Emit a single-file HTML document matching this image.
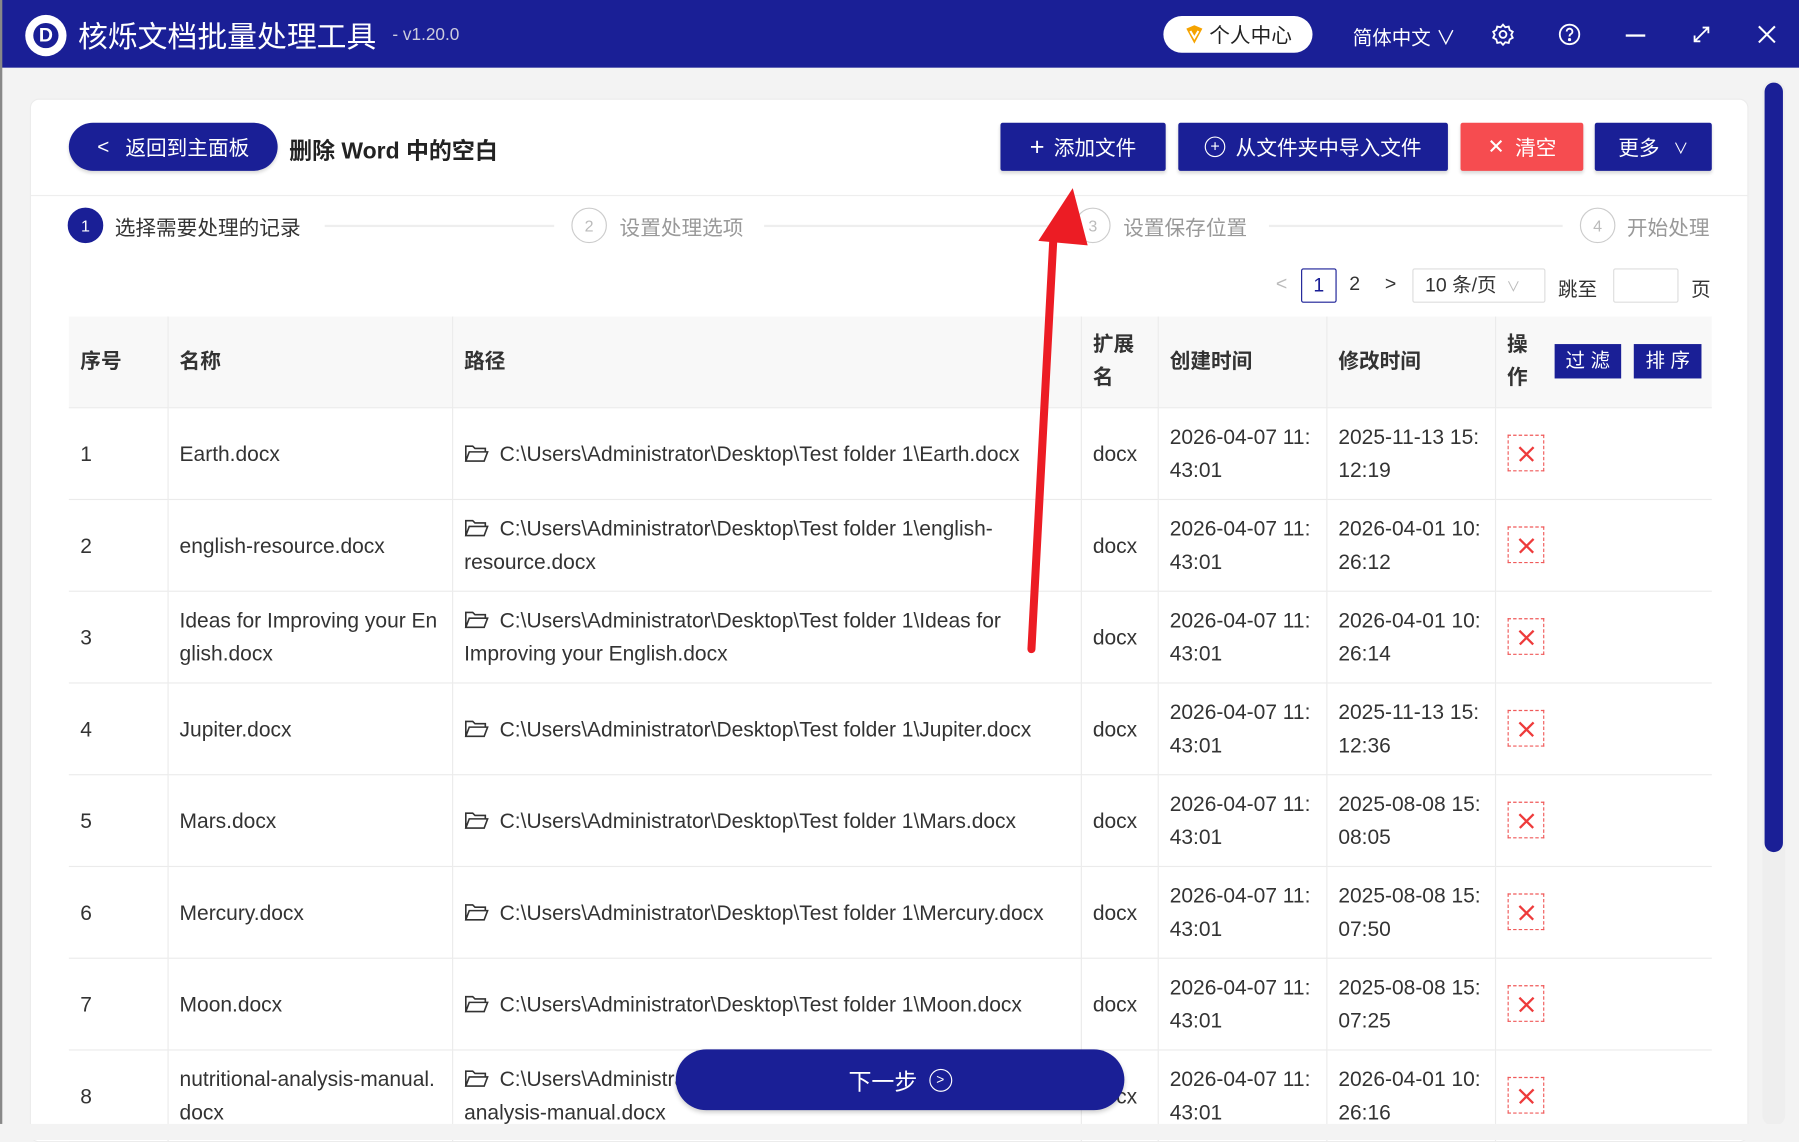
<!DOCTYPE html>
<html><head><meta charset="utf-8">
<style>
*{margin:0;padding:0;box-sizing:border-box}
html,body{width:1799px;height:1140px;overflow:hidden;background:#f3f3f3}
#w{position:absolute;left:0;top:0;width:1568px;height:994px;transform:scale(1.14732,1.14688);transform-origin:0 0;font-family:"Liberation Sans","Noto Sans CJK SC",sans-serif;color:#333;background:#f3f3f3}
.a{position:absolute}
.top{left:0;top:0;width:1568px;height:59px;background:#1a1f96}
.btn{position:absolute;background:#1a1f96;color:#fff;font-size:18px;display:flex;align-items:center;justify-content:center;border-radius:2px;box-shadow:0 2px 3px rgba(0,0,0,.15)}
.circ{position:absolute;width:31px;height:31px;border-radius:50%;border:1.5px solid #ccc;color:#bbb;font-size:14px;display:flex;align-items:center;justify-content:center}
.stx{position:absolute;font-size:18px;color:#999;top:185px}
.ln{position:absolute;height:2px;background:#eee;top:196px}
table{position:absolute;left:60px;top:276px;width:1432px;border-collapse:collapse;table-layout:fixed;font-size:18.3px}
td,th{border-bottom:1px solid #ebebeb;border-right:1px solid #ebebeb;padding:0 10px;text-align:left;vertical-align:middle;line-height:29px}
th{background:#f8f8f8;height:79px;font-weight:bold;font-size:18px;color:#333}
td{height:80px;color:#333;white-space:nowrap;overflow:hidden}
td:last-child,th:last-child{border-right:none}
.x{display:inline-block;width:32px;height:32px;border:1px dashed #f05a5a;position:relative;vertical-align:middle}
.x:before,.x:after{content:"";position:absolute;left:7px;top:15px;width:17px;height:1.5px;background:#ee3b3b;transform:rotate(45deg)}
.x:after{transform:rotate(-45deg)}
.fd{display:inline-block;width:21px;height:15px;vertical-align:-1px;margin-right:10px}
.fb{background:#1a1f96;color:#fff;font-weight:normal;font-size:17px;padding:0 10px;line-height:30px;white-space:nowrap}
</style></head><body><div id="w">
<div class="a top"></div>
<div class="a" style="left:0;top:0;width:2px;height:994px;background:#888"></div>
<div class="a" style="left:22px;top:13px;width:36px;height:36px;border-radius:50%;background:#fff;display:flex;align-items:center;justify-content:center"><div style="width:22px;height:22px;border-radius:50%;background:#1a1f96;color:#fff;font-weight:bold;font-size:17px;display:flex;align-items:center;justify-content:center">D</div></div>
<div class="a" style="left:68px;top:12px;font-size:26px;color:#fff">核烁文档批量处理工具</div>
<div class="a" style="left:342px;top:22px;font-size:15px;color:#ccd">- v1.20.0</div>
<div class="a" style="left:1014px;top:14px;width:130px;height:32px;border-radius:16px;background:#fff;display:flex;align-items:center;justify-content:center;font-size:18px;color:#222"><svg width="18" height="18" viewBox="0 0 18 18" style="margin-right:4px"><path d="M2 4l7-3 7 3-7 13z" fill="#f5a300"/><path d="M5.5 6L9 12l3.5-6" stroke="#fff" stroke-width="1.8" fill="none"/></svg>个人中心</div>
<div class="a" style="left:1179px;top:19px;font-size:17px;color:#fff">简体中文 ∨</div>
<svg class="a" style="left:1300px;top:20px" width="20" height="20" viewBox="0 0 20 20" fill="none" stroke="#fff" stroke-width="1.6"><circle cx="10" cy="10" r="3"/><path d="M10 1.5l2 2.3 3-.6.8 3 2.7 1.5-1.3 2.6 1.3 2.6-2.7 1.5-.8 3-3-.6-2 2.3-2-2.3-3 .6-.8-3-2.7-1.5 1.3-2.6-1.3-2.6 2.7-1.5.8-3 3 .6z"/></svg>
<svg class="a" style="left:1358px;top:20px" width="20" height="20" viewBox="0 0 20 20" fill="none" stroke="#fff" stroke-width="1.6"><circle cx="10" cy="10" r="8.5"/><path d="M7.5 7.5a2.5 2.5 0 1 1 3.5 2.3c-.8.4-1 1-1 2"/><circle cx="10" cy="14.5" r=".6" fill="#fff"/></svg>
<div class="a" style="left:1417px;top:30px;width:17px;height:2px;background:#fff"></div>
<svg class="a" style="left:1475px;top:22px" width="16" height="16" viewBox="0 0 16 16" stroke="#fff" stroke-width="1.6" fill="none"><path d="M2 14L14 2M9 2h5v5M2 9v5h5"/></svg>
<svg class="a" style="left:1532px;top:22px" width="16" height="16" viewBox="0 0 16 16" stroke="#fff" stroke-width="1.8"><path d="M1 1l14 14M15 1L1 15"/></svg>

<div class="a" style="left:26px;top:86px;width:1498px;height:910px;background:#fff;border:1px solid #ececec;border-radius:8px"></div>
<div class="a" style="left:1536px;top:70px;width:20px;height:912px;background:#eee;border-radius:10px"></div>
<div class="a" style="left:1538px;top:72px;width:16px;height:671px;background:#1a1f96;border-radius:8px"></div>

<div class="a" style="left:60px;top:107px;width:182px;height:42px;border-radius:21px;background:#1a1f96;color:#fff;font-size:18px;display:flex;align-items:center;justify-content:center;box-shadow:0 2px 3px rgba(0,0,0,.15)"><span style="margin-right:14px">&lt;</span>返回到主面板</div>
<div class="a" style="left:252px;top:115px;font-size:20px;font-weight:bold;color:#222">删除 Word 中的空白</div>
<div class="btn" style="left:872px;top:107px;width:144px;height:42px"><span style="font-size:22px;margin-right:8px;font-weight:300">+</span>添加文件</div>
<div class="btn" style="left:1027px;top:107px;width:235px;height:42px"><span style="display:inline-block;width:18px;height:18px;border:1.5px solid #fff;border-radius:50%;font-size:14px;line-height:15px;text-align:center;margin-right:9px">+</span>从文件夹中导入文件</div>
<div class="btn" style="left:1273px;top:107px;width:107px;height:42px;background:#f64c50"><span style="margin-right:9px">✕</span>清空</div>
<div class="btn" style="left:1390px;top:107px;width:102px;height:42px">更多<span style="margin-left:12px;font-size:13px">∨</span></div>
<div class="a" style="left:27px;top:170px;width:1496px;height:1px;background:#eee"></div>

<div class="circ" style="left:59px;top:181px;background:#1a1f96;border-color:#1a1f96;color:#fff">1</div>
<div class="stx" style="left:100px;color:#333">选择需要处理的记录</div>
<div class="ln" style="left:283px;width:200px"></div>
<div class="circ" style="left:498px;top:181px">2</div>
<div class="stx" style="left:540px">设置处理选项</div>
<div class="ln" style="left:666px;width:262px"></div>
<div class="circ" style="left:937px;top:181px">3</div>
<div class="stx" style="left:979px">设置保存位置</div>
<div class="ln" style="left:1106px;width:256px"></div>
<div class="circ" style="left:1377px;top:181px">4</div>
<div class="stx" style="left:1418px">开始处理</div>

<div class="a" style="left:1112px;top:238px;font-size:17px;color:#bbb">&lt;</div>
<div class="a" style="left:1134px;top:234px;width:31px;height:30px;border:1px solid #1a1f96;border-radius:2px;font-size:17px;color:#1a1f96;text-align:center;line-height:28px">1</div>
<div class="a" style="left:1176px;top:238px;font-size:17px">2</div>
<div class="a" style="left:1207px;top:238px;font-size:17px">&gt;</div>
<div class="a" style="left:1231px;top:234px;width:116px;height:30px;border:1px solid #ddd;border-radius:2px;font-size:17px;line-height:28px;padding-left:10px">10 条/页 <span style="color:#bbb;font-size:12px;margin-left:4px">∨</span></div>
<div class="a" style="left:1358px;top:238px;font-size:17px">跳至</div>
<div class="a" style="left:1406px;top:234px;width:57px;height:30px;border:1px solid #ddd;border-radius:2px"></div>
<div class="a" style="left:1474px;top:238px;font-size:17px">页</div>

<table>
<colgroup><col style="width:86px"><col style="width:248px"><col style="width:548px"><col style="width:67px"><col style="width:147px"><col style="width:147px"><col style="width:189px"></colgroup>
<tr><th>序号</th><th>名称</th><th>路径</th><th>扩展<br>名</th><th>创建时间</th><th>修改时间</th><th><div style="display:flex;align-items:center"><span style="line-height:29px">操<br>作</span><span class="fb" style="margin-left:23px">过 滤</span><span class="fb" style="margin-left:11px">排 序</span></div></th></tr>
<tr><td>1</td><td>Earth.docx</td><td><svg class="fd" viewBox="0 0 21 15" fill="none" stroke="#333" stroke-width="1.4"><path d="M1 14V1h6l2 2h9v3M1 14l3-8h16l-3 8z"/></svg>C:\Users\Administrator\Desktop\Test folder 1\Earth.docx</td><td>docx</td><td>2026-04-07 11:<br>43:01</td><td>2025-11-13 15:<br>12:19</td><td><span class="x"></span></td></tr>
<tr><td>2</td><td>english-resource.docx</td><td><svg class="fd" viewBox="0 0 21 15" fill="none" stroke="#333" stroke-width="1.4"><path d="M1 14V1h6l2 2h9v3M1 14l3-8h16l-3 8z"/></svg>C:\Users\Administrator\Desktop\Test folder 1\english-<br>resource.docx</td><td>docx</td><td>2026-04-07 11:<br>43:01</td><td>2026-04-01 10:<br>26:12</td><td><span class="x"></span></td></tr>
<tr><td>3</td><td>Ideas for Improving your En<br>glish.docx</td><td><svg class="fd" viewBox="0 0 21 15" fill="none" stroke="#333" stroke-width="1.4"><path d="M1 14V1h6l2 2h9v3M1 14l3-8h16l-3 8z"/></svg>C:\Users\Administrator\Desktop\Test folder 1\Ideas for<br>Improving your English.docx</td><td>docx</td><td>2026-04-07 11:<br>43:01</td><td>2026-04-01 10:<br>26:14</td><td><span class="x"></span></td></tr>
<tr><td>4</td><td>Jupiter.docx</td><td><svg class="fd" viewBox="0 0 21 15" fill="none" stroke="#333" stroke-width="1.4"><path d="M1 14V1h6l2 2h9v3M1 14l3-8h16l-3 8z"/></svg>C:\Users\Administrator\Desktop\Test folder 1\Jupiter.docx</td><td>docx</td><td>2026-04-07 11:<br>43:01</td><td>2025-11-13 15:<br>12:36</td><td><span class="x"></span></td></tr>
<tr><td>5</td><td>Mars.docx</td><td><svg class="fd" viewBox="0 0 21 15" fill="none" stroke="#333" stroke-width="1.4"><path d="M1 14V1h6l2 2h9v3M1 14l3-8h16l-3 8z"/></svg>C:\Users\Administrator\Desktop\Test folder 1\Mars.docx</td><td>docx</td><td>2026-04-07 11:<br>43:01</td><td>2025-08-08 15:<br>08:05</td><td><span class="x"></span></td></tr>
<tr><td>6</td><td>Mercury.docx</td><td><svg class="fd" viewBox="0 0 21 15" fill="none" stroke="#333" stroke-width="1.4"><path d="M1 14V1h6l2 2h9v3M1 14l3-8h16l-3 8z"/></svg>C:\Users\Administrator\Desktop\Test folder 1\Mercury.docx</td><td>docx</td><td>2026-04-07 11:<br>43:01</td><td>2025-08-08 15:<br>07:50</td><td><span class="x"></span></td></tr>
<tr><td>7</td><td>Moon.docx</td><td><svg class="fd" viewBox="0 0 21 15" fill="none" stroke="#333" stroke-width="1.4"><path d="M1 14V1h6l2 2h9v3M1 14l3-8h16l-3 8z"/></svg>C:\Users\Administrator\Desktop\Test folder 1\Moon.docx</td><td>docx</td><td>2026-04-07 11:<br>43:01</td><td>2025-08-08 15:<br>07:25</td><td><span class="x"></span></td></tr>
<tr><td>8</td><td>nutritional-analysis-manual.<br>docx</td><td><svg class="fd" viewBox="0 0 21 15" fill="none" stroke="#333" stroke-width="1.4"><path d="M1 14V1h6l2 2h9v3M1 14l3-8h16l-3 8z"/></svg>C:\Users\Administrator\Desktop\Test folder 1\nutritional-<br>analysis-manual.docx</td><td>docx</td><td>2026-04-07 11:<br>43:01</td><td>2026-04-01 10:<br>26:16</td><td><span class="x"></span></td></tr>
</table>

<div class="a" style="left:0;top:980px;width:1568px;height:14px;background:#f3f3f3"></div>
<div class="a" style="left:589px;top:915px;width:391px;height:53px;border-radius:27px;background:#1a1f96;color:#fff;font-size:20px;display:flex;align-items:center;justify-content:center;box-shadow:0 2px 4px rgba(0,0,0,.2)">下一步<span style="display:inline-block;width:20px;height:20px;border:1.5px solid #fff;border-radius:50%;font-size:12px;line-height:17px;text-align:center;margin-left:10px">&gt;</span></div>

<svg class="a" style="left:0;top:0" width="1568" height="994"><path d="M899 566L918 210" stroke="#ec1c24" stroke-width="7" stroke-linecap="round"/><path d="M935 164L948 214L905 210z" fill="#ec1c24"/></svg>
</div></body></html>
